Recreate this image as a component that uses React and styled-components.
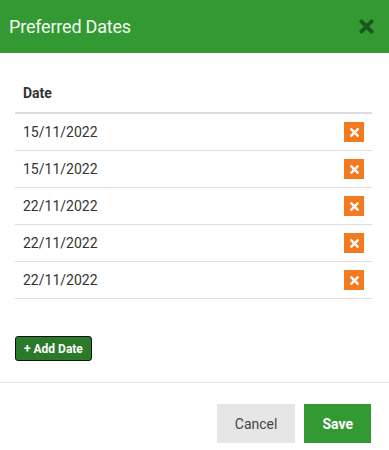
import React from 'react';
import styled, { createGlobalStyle } from 'styled-components';
import { FaTimes } from 'react-icons/fa';

const GlobalStyle = createGlobalStyle`
  body {
    margin: 0;
    background: #ffffff;
    font-family: Roboto, "Liberation Sans", sans-serif;
  }
`;

const dates = ['15/11/2022', '15/11/2022', '22/11/2022', '22/11/2022', '22/11/2022'];

const App = () => {
  return (
    <>
      <GlobalStyle />
      <Modal>
        <Header>
          <Title>Preferred Dates</Title>
          <CloseButton aria-label="Close">
            <FaTimes />
          </CloseButton>
        </Header>
        <Body>
          <Table>
            <thead>
              <tr>
                <Th>Date</Th>
                <Th />
              </tr>
            </thead>
            <tbody>
              {dates.map((date, i) => (
                <tr key={i}>
                  <Td>{date}</Td>
                  <Td $right>
                    <RemoveButton aria-label="Remove">
                      <FaTimes />
                    </RemoveButton>
                  </Td>
                </tr>
              ))}
            </tbody>
          </Table>
          <AddButton>+ Add Date</AddButton>
        </Body>
        <Footer>
          <FooterButton $variant="cancel">Cancel</FooterButton>
          <FooterButton $variant="save">Save</FooterButton>
        </Footer>
      </Modal>
    </>
  );
};

const Modal = styled.div`
  width: 389px;
  background: #ffffff;
`;

const Header = styled.div`
  height: 53px;
  background: #339933;
  display: flex;
  align-items: center;
  justify-content: space-between;
  padding: 0 12px 0 9px;
  box-sizing: border-box;
`;

const Title = styled.h4`
  margin: 0;
  color: #f2f7f0;
  font-size: 18px;
  font-weight: 400;
  letter-spacing: -0.2px;
`;

const CloseButton = styled.button`
  border: 0;
  background: none;
  padding: 0;
  color: #1b561b;
  font-size: 21px;
  display: flex;
  align-items: center;
  cursor: pointer;
`;

const Body = styled.div`
  padding: 21px 17px 21px 15px;
`;

const Table = styled.table`
  width: 100%;
  border-collapse: collapse;
  margin-bottom: 37px;
`;

const Th = styled.th`
  text-align: left;
  font-size: 14px;
  font-weight: 700;
  color: #333333;
  height: 38px;
  padding: 0 8px;
  border-bottom: 2px solid #dddddd;
`;

const Td = styled.td`
  font-size: 14px;
  color: #333333;
  height: 36px;
  padding: 0 8px;
  border-bottom: 1px solid #dddddd;
  text-align: ${(p) => (p.$right ? 'right' : 'left')};
  vertical-align: middle;
`;

const RemoveButton = styled.button`
  width: 20px;
  height: 20px;
  border: 0;
  padding: 0;
  background: #f47a20;
  color: #ffffff;
  font-size: 13px;
  display: inline-flex;
  align-items: center;
  justify-content: center;
  vertical-align: middle;
  cursor: pointer;
`;

const AddButton = styled.button`
  height: 25px;
  padding: 0 8px;
  background: #2a7a2a;
  border: 1px solid #111111;
  border-radius: 3px;
  color: #ffffff;
  font-family: Roboto, "Liberation Sans", sans-serif;
  font-size: 12px;
  font-weight: 700;
  cursor: pointer;
`;

const Footer = styled.div`
  border-top: 1px solid #e5e5e5;
  display: flex;
  justify-content: flex-end;
  gap: 9px;
  padding: 21px 18px 20px 0;
`;

const FooterButton = styled.button`
  height: 39px;
  border: 0;
  padding: 0 18px;
  background: ${(p) => (p.$variant === 'save' ? '#339933' : '#e6e6e6')};
  color: ${(p) => (p.$variant === 'save' ? '#ffffff' : '#444444')};
  font-family: Roboto, "Liberation Sans", sans-serif;
  font-size: 14px;
  font-weight: ${(p) => (p.$variant === 'save' ? 700 : 400)};
  cursor: pointer;
`;

export default App;
